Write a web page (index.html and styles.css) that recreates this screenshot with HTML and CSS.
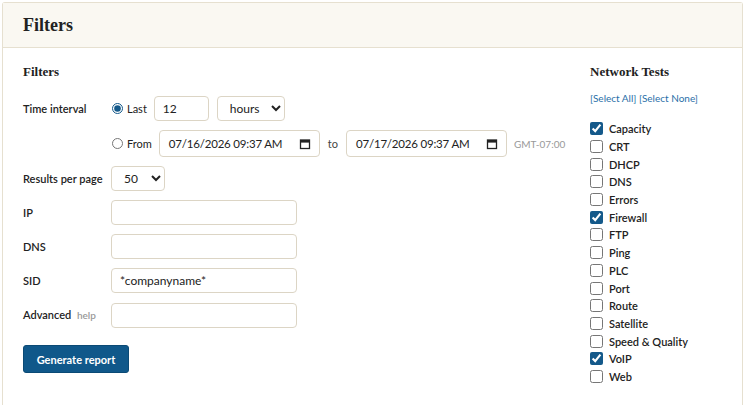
FILE: index.html
```html
<!DOCTYPE html>
<html lang="en">
  <head>
    <meta charset="utf-8" />
    <title>Filters</title>
    <link rel="stylesheet" href="styles.css">
  </head>
  <body>
    <div class="card">
      <header class="card-head">
        <h1>Filters</h1>
      </header>
      <div class="card-body">
        <section class="filters">
          <h2>Filters</h2>
          <div class="form">
            <label class="lbl">Time interval</label>
            <div class="ctl">
              <div class="line">
                <label class="radio"><input type="radio" name="mode" checked> Last</label>
                <input class="txt num" type="text" value="12">
                <select class="sel hours"><option>hours</option></select>
              </div>
              <div class="line">
                <label class="radio"><input type="radio" name="mode"> From</label>
                <div class="txt dt">
                  <span>07/16/2026 09:37 AM</span>
                  <svg viewBox="0 0 12 12" width="12" height="12"><rect x="1.5" y="2" width="9" height="8.5" fill="none" stroke="#222" stroke-width="1.3"/><rect x="1.5" y="2" width="9" height="2.6" fill="#222"/></svg>
                </div>
                <span class="to">to</span>
                <div class="txt dt">
                  <span>07/17/2026 09:37 AM</span>
                  <svg viewBox="0 0 12 12" width="12" height="12"><rect x="1.5" y="2" width="9" height="8.5" fill="none" stroke="#222" stroke-width="1.3"/><rect x="1.5" y="2" width="9" height="2.6" fill="#222"/></svg>
                </div>
                <span class="tz">GMT-07:00</span>
              </div>
            </div>

            <label class="lbl">Results per page</label>
            <div class="ctl"><select class="sel per"><option>50</option></select></div>

            <label class="lbl">IP</label>
            <div class="ctl"><input class="txt wide" type="text"></div>

            <label class="lbl">DNS</label>
            <div class="ctl"><input class="txt wide" type="text"></div>

            <label class="lbl">SID</label>
            <div class="ctl"><input class="txt wide" type="text" value="*companyname*"></div>

            <label class="lbl">Advanced <a class="help" href="#">help</a></label>
            <div class="ctl"><input class="txt wide" type="text"></div>
          </div>
          <button class="go">Generate report</button>
        </section>

        <aside class="tests">
          <h2>Network Tests</h2>
          <p class="pick"><a href="#">[Select All]</a> <a href="#">[Select None]</a></p>
          <ul>
            <li><label><input type="checkbox" checked> Capacity</label></li>
            <li><label><input type="checkbox"> CRT</label></li>
            <li><label><input type="checkbox"> DHCP</label></li>
            <li><label><input type="checkbox"> DNS</label></li>
            <li><label><input type="checkbox"> Errors</label></li>
            <li><label><input type="checkbox" checked> Firewall</label></li>
            <li><label><input type="checkbox"> FTP</label></li>
            <li><label><input type="checkbox"> Ping</label></li>
            <li><label><input type="checkbox"> PLC</label></li>
            <li><label><input type="checkbox"> Port</label></li>
            <li><label><input type="checkbox"> Route</label></li>
            <li><label><input type="checkbox"> Satellite</label></li>
            <li><label><input type="checkbox"> Speed &amp; Quality</label></li>
            <li><label><input type="checkbox" checked> VoIP</label></li>
            <li><label><input type="checkbox"> Web</label></li>
          </ul>
        </aside>
      </div>
    </div>
  </body>
</html>
```

FILE: styles.css
```css
* {
  box-sizing: border-box;
}
body {
  margin: 2px 7px 0 2px;
  background: #fff;
  font-family: Lato, sans-serif;
  font-size: 11px;
  color: #222;
}
.card {
  border: 1px solid #e6e0d0;
  border-bottom: 0;
  border-radius: 3px 3px 0 0;
  height: 410px;
}
.card-head {
  background: #faf8f2;
  border-bottom: 1px solid #e6e0d0;
  height: 45px;
  padding: 0 20px;
  display: flex;
  align-items: center;
}
h1 {
  margin: 0;
  font-family: "Liberation Serif", serif;
  font-size: 18px;
  font-weight: bold;
  color: #222;
}
h2 {
  margin: 0;
  font-family: "Liberation Serif", serif;
  font-size: 13px;
  line-height: 16px;
  font-weight: bold;
  color: #222;
}
.card-body {
  display: flex;
  padding: 16px 20px 0;
}
.filters {
  flex: 1;
}
.filters h2 {
  margin-bottom: 16px;
}

/* form grid */
.form {
  display: grid;
  grid-template-columns: 88px auto;
  row-gap: 9px;
  align-items: center;
}
.lbl {
  font-weight: 600;
  align-self: start;
  line-height: 25px;
  white-space: nowrap;
}
.ctl .line {
  display: flex;
  align-items: center;
  gap: 7px;
}
.ctl .line + .line {
  margin-top: 9px;
}
.radio {
  display: flex;
  align-items: center;
  gap: 4px;
}
.radio input {
  margin: 0 0 0 1px;
  width: 11px;
  height: 11px;
  accent-color: #14598a;
}
.txt,
.sel {
  height: 25px;
  border: 1px solid #dcd5c5;
  border-radius: 4px;
  background: #fff;
  font-family: Lato, sans-serif;
  font-size: 12px;
  color: #222;
  padding: 0 8px;
}
.num {
  width: 55px;
}
.hours {
  width: 68px;
  margin-left: 1px;
}
.per {
  width: 54px;
}
.dt {
  width: 161px;
  height: 27px;
  font-size: 11.5px;
  letter-spacing: -0.2px;
  white-space: nowrap;
  display: flex;
  align-items: center;
  justify-content: space-between;
  padding: 0 8px 0 9px;
}
.wide {
  width: 186px;
}
.to {
  margin: 0 1px;
  color: #444;
}
.tz {
  color: #999;
  font-size: 10px;
}
.help {
  color: #999;
  font-size: 10px;
  text-decoration: none;
  margin-left: 3px;
  font-weight: 600;
}
.go {
  margin-top: 17px;
  width: 106px;
  height: 28px;
  background: #10588a;
  color: #fff;
  border: 1px solid #0b4a75;
  border-radius: 3px;
  font-family: Lato, sans-serif;
  font-size: 11px;
  font-weight: bold;
}

/* network tests */
.tests {
  width: 132px;
}
.pick {
  margin: 12px 0 16px;
  font-size: 10px;
}
.pick a {
  color: #2a6fa8;
  text-decoration: none;
}
.tests ul {
  list-style: none;
  margin: 0;
  padding: 0;
}
.tests li {
  height: 17.7px;
  display: flex;
  align-items: center;
}
.tests label {
  display: flex;
  align-items: center;
  gap: 6px;
  font-weight: 600;
}
.tests input {
  margin: 0;
  width: 13px;
  height: 13px;
  accent-color: #14598a;
}
```
